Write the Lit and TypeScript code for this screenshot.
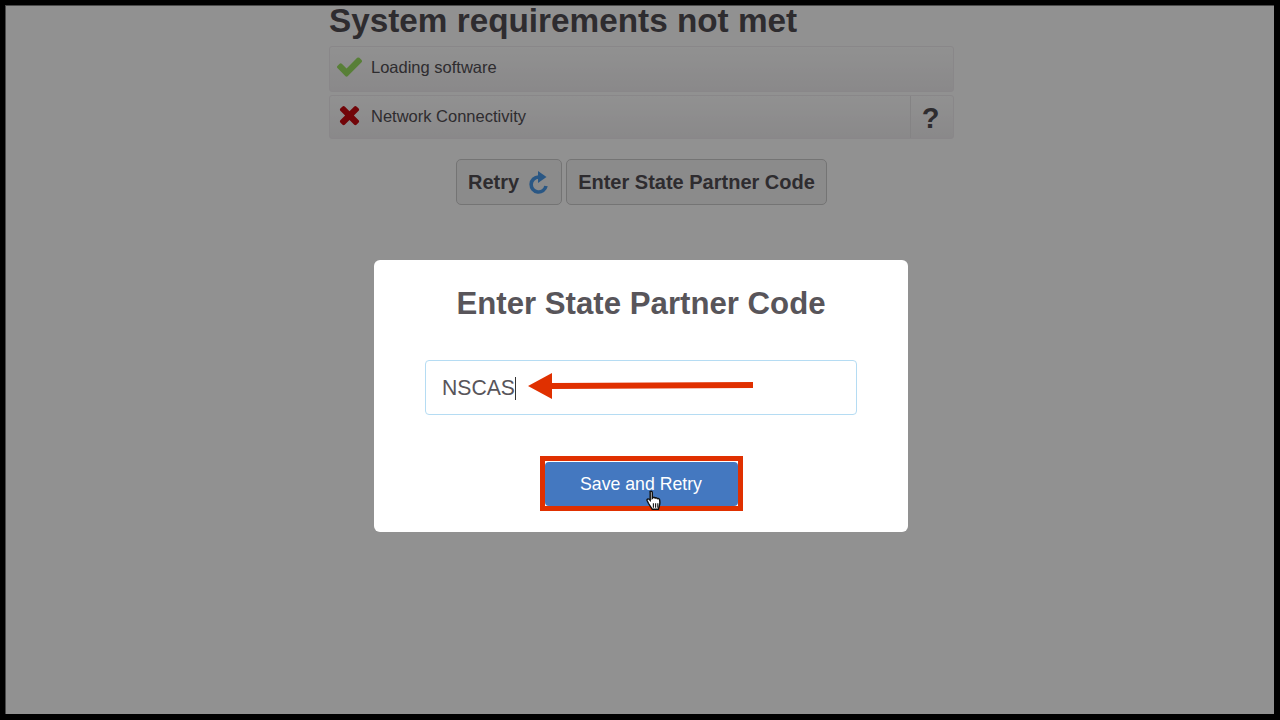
import { LitElement, html, css } from 'lit';
import { customElement } from 'lit/decorators.js';

const CHECK = 'M1671 566q0 40-28 68l-724 724-136 136q-28 28-68 28t-68-28l-136-136-362-362q-28-28-28-68t28-68l136-136q28-28 68-28t68 28l294 295 656-657q28-28 68-28t68 28l136 136q28 28 28 68z';
const TIMES = 'M1490 1322q0 40-28 68l-136 136q-28 28-68 28t-68-28l-294-294-294 294q-28 28-68 28t-68-28l-136-136q-28-28-28-68t28-68l294-294-294-294q-28-28-28-68t28-68l136-136q28-28 68-28t68 28l294 294 294-294q28-28 68-28t68 28l136 136q28 28 28 68t-28 68l-294 294 294 294q28 28 28 68z';

@customElement('app-root')
export class AppRoot extends LitElement {
  static styles = css`
    :host {
      display: block;
      position: relative;
      box-sizing: border-box;
      width: 1280px;
      height: 720px;
      overflow: hidden;
      border-style: solid;
      border-color: #000;
      border-width: 5px 6px 6px 5px;
      background: #fff;
      font-family: 'Liberation Sans', Arial, sans-serif;
      color: #524e54;
    }

    .page {
      width: 625px;
      margin-left: 324px;
    }

    h1 {
      margin: 0;
      font-size: 33.3px;
      line-height: 32px;
      font-weight: 700;
    }

    .checks {
      margin-top: 9px;
      display: flex;
      flex-direction: column;
      gap: 4px;
    }

    .row {
      display: flex;
      align-items: center;
      height: 46px;
      padding-bottom: 4px;
      background: linear-gradient(#fff, #f2f0f2);
      border: 1px solid #f1edf1;
      border-radius: 3px;
      box-sizing: border-box;
      font-size: 16.5px;
    }

    .row.second {
      height: 44px;
      margin-top: -1px;
      padding-bottom: 0;
    }

    .row .icon {
      width: 39px;
      margin-right: 2px;
      display: flex;
      justify-content: center;
      flex-shrink: 0;
      margin-top: -1px;
    }

    .row.second .icon {
      margin-top: -5px;
    }

    .row .label {
      flex: 1;
    }

    .row.second .label {
      margin-bottom: 2px;
    }

    .help {
      width: 43px;
      align-self: stretch;
      display: flex;
      align-items: center;
      justify-content: center;
      box-sizing: border-box;
      padding: 2px 3px 0 0;
      border-left: 1px solid #e8e6e8;
      font-size: 29px;
      font-weight: 700;
    }

    .actions {
      margin-top: 20px;
      margin-left: 127px;
      display: flex;
      gap: 4px;
    }

    .btn {
      display: flex;
      align-items: center;
      height: 46px;
      padding: 0 11px;
      box-sizing: border-box;
      border: 1px solid #ccc;
      border-radius: 5px;
      background: #f5f4f5;
      font-size: 20px;
      font-weight: 700;
    }

    .btn svg {
      margin-left: 9px;
      margin-right: 2px;
    }

    .scrim {
      position: absolute;
      inset: 0;
      background: rgba(0, 0, 0, 0.43);
      box-shadow: inset 1px 1px 0 #4a4a4a;
    }

    .edge {
      position: absolute;
      left: -5px;
      top: -2px;
      bottom: -6px;
      width: 1px;
      background: #3d5266;
    }

    .modal {
      position: absolute;
      left: 369px;
      top: 255px;
      box-sizing: border-box;
      width: 534px;
      height: 272px;
      background: #fff;
      border-radius: 6px;
      display: flex;
      flex-direction: column;
      align-items: center;
      color: #58555a;
    }

    h2 {
      margin: 26px 0 0;
      font-size: 31.2px;
      line-height: 36px;
      font-weight: 700;
    }

    .field {
      position: relative;
      box-sizing: border-box;
      width: 432px;
      height: 55px;
      margin-top: 38px;
      padding: 1px 0 0 16px;
      display: flex;
      align-items: center;
      border: 1px solid #b5dcf3;
      border-radius: 4px;
      font-size: 21.2px;
    }

    .caret {
      width: 1px;
      height: 23px;
      background: #333;
    }

    .arrow {
      position: absolute;
      left: 100px;
      top: 12px;
    }

    .highlight {
      margin-top: 41px;
      box-sizing: border-box;
      width: 203px;
      height: 55px;
      border: 5px solid #e03000;
      padding-top: 1px;
    }

    .save {
      position: relative;
      height: 44px;
      display: flex;
      align-items: center;
      justify-content: center;
      background: #4478c0;
      border-radius: 4px;
      color: #fff;
      font-size: 17.7px;
    }

    .hand {
      position: absolute;
      left: 101px;
      top: 28px;
    }
  `;

  render() {
    return html`
      <div class="page">
        <h1>System requirements not met</h1>
        <div class="checks">
          <div class="row">
            <span class="icon">
              <svg width="29" height="29" viewBox="0 0 1792 1792"><path fill="#9ce062" d=${CHECK} /></svg>
            </span>
            <span class="label">Loading software</span>
          </div>
          <div class="row second">
            <span class="icon">
              <svg width="29" height="29" viewBox="0 0 1792 1792"><path fill="#c80a10" d=${TIMES} /></svg>
            </span>
            <span class="label">Network Connectivity</span>
            <span class="help">?</span>
          </div>
        </div>
        <div class="actions">
          <div class="btn">
            Retry
            <svg width="20" height="23" viewBox="0 0 20 23">
              <path fill="none" stroke="#4a9ae8" stroke-width="3.6" d="M10.500 6A7.500 7.500 0 1 0 18 15" />
              <path fill="#4a9ae8" d="M10 0 18.500 6 10 12z" />
            </svg>
          </div>
          <div class="btn">Enter State Partner Code</div>
        </div>
      </div>

      <div class="scrim"></div>
      <div class="edge"></div>

      <div class="modal">
        <h2>Enter State Partner Code</h2>
        <div class="field">
          NSCAS<span class="caret"></span>
          <svg class="arrow" width="230" height="28" viewBox="0 0 230 28">
            <path fill="#e03000" d="M2 13 26 0V10L227 9V15L26 16V26z" />
          </svg>
        </div>
        <div class="highlight">
          <div class="save">
            Save and Retry
            <svg class="hand" width="17" height="21" viewBox="0 0 15 19">
              <path
                fill="#fff"
                stroke="#111"
                stroke-width="1.300"
                d="M3.500 1.500c1-.8 2-.2 2 1v5l.6-.6c.8-.5 1.600-.3 2 .4.800-.5 1.600-.2 2 .5.800-.4 1.800 0 2 1 .4 2 .3 4-.2 5.500l-.9 3.200H5.500L2 12 .8 9.500c-.4-1 .8-2 1.800-1.100l1 1V2.500z"
              />
              <path stroke="#111" stroke-width="1" d="M6.500 12v4M8.500 12v4M10.500 12v4" />
            </svg>
          </div>
        </div>
      </div>
    `;
  }
}

declare global {
  interface HTMLElementTagNameMap {
    'app-root': AppRoot;
  }
}
